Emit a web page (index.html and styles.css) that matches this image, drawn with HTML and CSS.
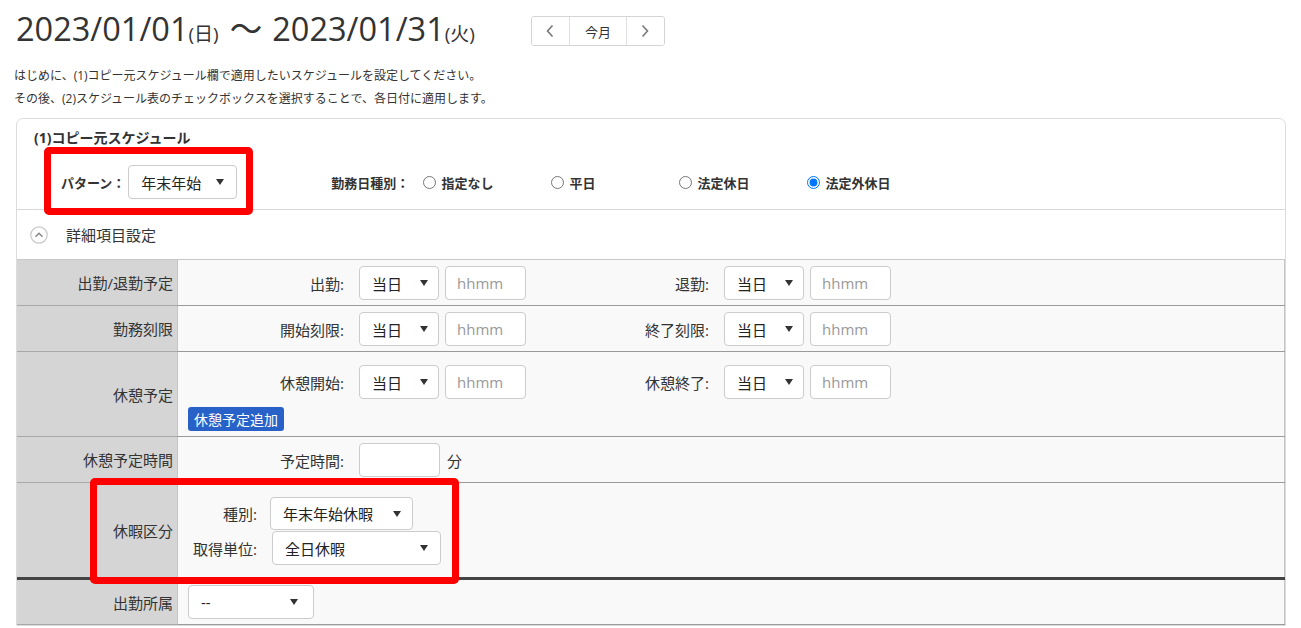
FILE: index.html
```html
<!DOCTYPE html>
<html lang="ja">
<head>
    <meta charset="UTF-8">
    <meta name="viewport" content="width=device-width, initial-scale=1.0">
    <title>スケジュールコピー</title>
    <link rel="stylesheet" href="styles.css">
</head>
<body>
    <div class="period">
        <h1 class="period-title">2023/01/01<small>(日)</small><span class="tilde">～</span>2023/01/31<small>(火)</small></h1>
        <div class="month-nav">
            <button class="nav-btn nav-prev" aria-label="前月">
                <svg width="10" height="14" viewBox="0 0 10 14"><path d="M7.5 1.5 L2.5 7 L7.5 12.5" fill="none" stroke="#777" stroke-width="1.6"/></svg>
            </button>
            <button class="nav-btn nav-today">今月</button>
            <button class="nav-btn nav-next" aria-label="翌月">
                <svg width="10" height="14" viewBox="0 0 10 14"><path d="M2.5 1.5 L7.5 7 L2.5 12.5" fill="none" stroke="#777" stroke-width="1.6"/></svg>
            </button>
        </div>
    </div>

    <p class="guide">
        はじめに、(1)コピー元スケジュール欄で適用したいスケジュールを設定してください。<br>
        その後、(2)スケジュール表のチェックボックスを選択することで、各日付に適用します。
    </p>

    <section class="card">
        <div class="card-head">
            <h2>(1)コピー元スケジュール</h2>
            <div class="pattern-row">
                <span class="bold-label">パターン：</span>
                <span class="select select-pattern">年末年始<i class="caret"></i></span>
                <div class="worktype">
                    <span class="bold-label worktype-label">勤務日種別：</span>
                    <label class="radio"><input type="radio" name="worktype">指定なし</label>
                    <label class="radio"><input type="radio" name="worktype">平日</label>
                    <label class="radio"><input type="radio" name="worktype">法定休日</label>
                    <label class="radio"><input type="radio" name="worktype" checked>法定外休日</label>
                </div>
            </div>
        </div>

        <div class="detail-toggle">
            <svg class="toggle-icon" width="18" height="18" viewBox="0 0 18 18">
                <circle cx="9" cy="9" r="8.2" fill="#fff" stroke="#c8c8c8" stroke-width="1.2"/>
                <path d="M5.5 10.8 L9 7.3 L12.5 10.8" fill="none" stroke="#888" stroke-width="1.6"/>
            </svg>
            詳細項目設定
        </div>

        <table class="detail">
            <tr class="row-plan">
                <th>出勤/退勤予定</th>
                <td>
                    <div class="fields">
                        <div class="field">
                            <span class="field-label">出勤:</span>
                            <span class="select select-day">当日<i class="caret"></i></span>
                            <span class="time-input">hhmm</span>
                        </div>
                        <div class="field">
                            <span class="field-label">退勤:</span>
                            <span class="select select-day">当日<i class="caret"></i></span>
                            <span class="time-input">hhmm</span>
                        </div>
                    </div>
                </td>
            </tr>
            <tr class="row-plan">
                <th>勤務刻限</th>
                <td>
                    <div class="fields">
                        <div class="field">
                            <span class="field-label">開始刻限:</span>
                            <span class="select select-day">当日<i class="caret"></i></span>
                            <span class="time-input">hhmm</span>
                        </div>
                        <div class="field">
                            <span class="field-label">終了刻限:</span>
                            <span class="select select-day">当日<i class="caret"></i></span>
                            <span class="time-input">hhmm</span>
                        </div>
                    </div>
                </td>
            </tr>
            <tr class="row-break">
                <th>休憩予定</th>
                <td>
                    <div class="fields">
                        <div class="field">
                            <span class="field-label">休憩開始:</span>
                            <span class="select select-day">当日<i class="caret"></i></span>
                            <span class="time-input">hhmm</span>
                        </div>
                        <div class="field">
                            <span class="field-label">休憩終了:</span>
                            <span class="select select-day">当日<i class="caret"></i></span>
                            <span class="time-input">hhmm</span>
                        </div>
                    </div>
                    <button class="add-btn">休憩予定追加</button>
                </td>
            </tr>
            <tr class="row-plan">
                <th>休憩予定時間</th>
                <td>
                    <div class="field">
                        <span class="field-label">予定時間:</span>
                        <span class="time-input minutes"></span>
                        <span class="unit">分</span>
                    </div>
                </td>
            </tr>
            <tr class="row-leave">
                <th>休暇区分</th>
                <td>
                    <div class="leave-grid">
                        <span class="leave-label">種別:</span>
                        <span class="select select-leave">年末年始休暇<i class="caret"></i></span>
                        <span class="leave-label">取得単位:</span>
                        <span class="select select-unit">全日休暇<i class="caret"></i></span>
                    </div>
                </td>
            </tr>
            <tr class="row-dept">
                <th>出勤所属</th>
                <td>
                    <span class="select select-dept">--<i class="caret"></i></span>
                </td>
            </tr>
        </table>

        <!-- 注目枠 -->
        <div class="mark mark-pattern"></div>
        <div class="mark mark-leave"></div>
    </section>
</body>
</html>
```

FILE: styles.css
```css
body {
    margin: 0;
    font-family: "Open Sans", "Noto Sans CJK JP", sans-serif;
    font-size: 14px;
    color: #333;
    background: #fff;
}

.period {
    display: flex;
    align-items: center;
    height: 34px;
    margin-top: 14px;
    padding-left: 16px;
}

.period-title {
    margin: 0;
    font-size: 32.5px;
    font-weight: normal;
    line-height: 34px;
    white-space: nowrap;
}

.period-title small {
    font-size: 19px;
}

.period-title .tilde {
    margin: 0 10px 0 11px;
}

.month-nav {
    display: flex;
    height: 30px;
    margin-left: 56px;
    border: 1px solid #d4d4d4;
    border-radius: 3px;
    box-sizing: border-box;
    overflow: hidden;
}

.nav-btn {
    display: flex;
    align-items: center;
    justify-content: center;
    padding: 0;
    border: none;
    background: #fff;
    font-family: inherit;
    font-size: 13px;
    color: #333;
    cursor: pointer;
}

.nav-prev { width: 37px; }
.nav-today {
    width: 58px;
    border-left: 1px solid #e0e0e0;
    border-right: 1px solid #e0e0e0;
}
.nav-next { width: 37px; }

.guide {
    margin: 16px 0 0 14px;
    font-size: 12px;
    line-height: 23px;
}

.card {
    position: relative;
    margin: 8px 15px 0 16px;
    border: 1px solid #dcdcdc;
    border-radius: 7px 7px 0 0;
}

.card-head {
    padding: 9px 0 10px 17px;
    border-bottom: 1px solid #d8d8d8;
}

.card-head h2 {
    margin: 0;
    font-size: 14px;
    font-weight: bold;
    line-height: 20px;
}

.pattern-row {
    display: flex;
    align-items: center;
    height: 34px;
    margin: 17px 0 0 27px;
}

.bold-label {
    font-size: 13px;
    font-weight: bold;
    margin-right: 3px;
}

.worktype {
    display: flex;
    align-items: center;
    margin-left: 94px;
}

.worktype-label {
    margin-right: 14px;
}

.radio {
    display: flex;
    align-items: center;
    width: 128px;
    font-size: 13px;
    font-weight: bold;
}

.radio input {
    width: 13px;
    height: 13px;
    margin: 0 5px 0 0;
}

.select {
    display: inline-flex;
    align-items: center;
    justify-content: space-between;
    box-sizing: border-box;
    height: 34px;
    padding: 0 11px 0 12px;
    border: 1px solid #ccc;
    border-radius: 4px;
    background: #fff;
    font-size: 15px;
    color: #222;
}

.caret {
    width: 0;
    height: 0;
    border-left: 4px solid transparent;
    border-right: 4px solid transparent;
    border-top: 6px solid #333;
}

.select-pattern { width: 109px; padding-right: 12px; }
.select-day { width: 80px; margin-left: 15px; padding-right: 10px; }
.select-leave { width: 143px; height: 33px; margin-left: 13px; }
.select-unit { width: 169px; margin-left: 15px; padding-right: 12px; }
.select-dept { width: 126px; padding-right: 15px; }

.detail-toggle {
    display: flex;
    align-items: center;
    height: 49px;
    padding-left: 13px;
    font-size: 15px;
}

.toggle-icon {
    margin-right: 18px;
}

.detail {
    width: 100%;
    border-collapse: collapse;
    border-top: 1px solid #c8c8c8;
}

.detail th {
    width: 156px;
    padding: 0 4px 0 0;
    background: #d5d5d5;
    text-align: right;
    font-weight: normal;
    font-size: 15px;
    border-bottom: 1px solid #a8a8a8;
}

.detail td {
    padding: 6px 10px 5px;
    background: #f9f9f9;
    border-left: 1px solid #c4c4c4;
    border-right: 1px solid #c4c4c4;
    border-bottom: 1px solid #9a9a9a;
}

.row-break td { padding: 13px 10px 5px; }
.row-leave td { padding: 14px 10px 12px; }
.row-leave th,
.row-leave td { border-bottom: 3px solid #444; }
.row-dept td { padding: 5px 10px 5px; }

.fields {
    display: flex;
}

.field {
    display: flex;
    align-items: center;
    width: 365px;
}

.field-label {
    width: 156px;
    text-align: right;
    font-size: 15px;
}

.time-input {
    display: inline-flex;
    align-items: center;
    box-sizing: border-box;
    width: 81px;
    height: 34px;
    margin-left: 6px;
    padding-left: 11px;
    border: 1px solid #ccc;
    border-radius: 4px;
    background: #fff;
    font-size: 15px;
    color: #999;
}

.time-input.minutes {
    margin-left: 15px;
}

.unit {
    margin-left: 7px;
    font-size: 15px;
}

.add-btn {
    display: block;
    height: 24px;
    margin-top: 8px;
    padding: 0 6px;
    border: none;
    border-radius: 3px;
    background: #2862c8;
    color: #fff;
    font-family: inherit;
    font-size: 14px;
    cursor: pointer;
}

.leave-grid {
    display: grid;
    grid-template-columns: 69px auto;
    row-gap: 1px;
    align-items: center;
    justify-items: start;
}

.leave-label {
    justify-self: end;
    font-size: 15px;
}

.mark {
    position: absolute;
    box-sizing: border-box;
    border: 7px solid #f00;
    border-radius: 5px;
}

.mark-pattern {
    left: 27px;
    top: 28px;
    width: 209px;
    height: 68px;
}

.mark-leave {
    left: 73px;
    top: 359px;
    width: 369px;
    height: 106px;
}
```
